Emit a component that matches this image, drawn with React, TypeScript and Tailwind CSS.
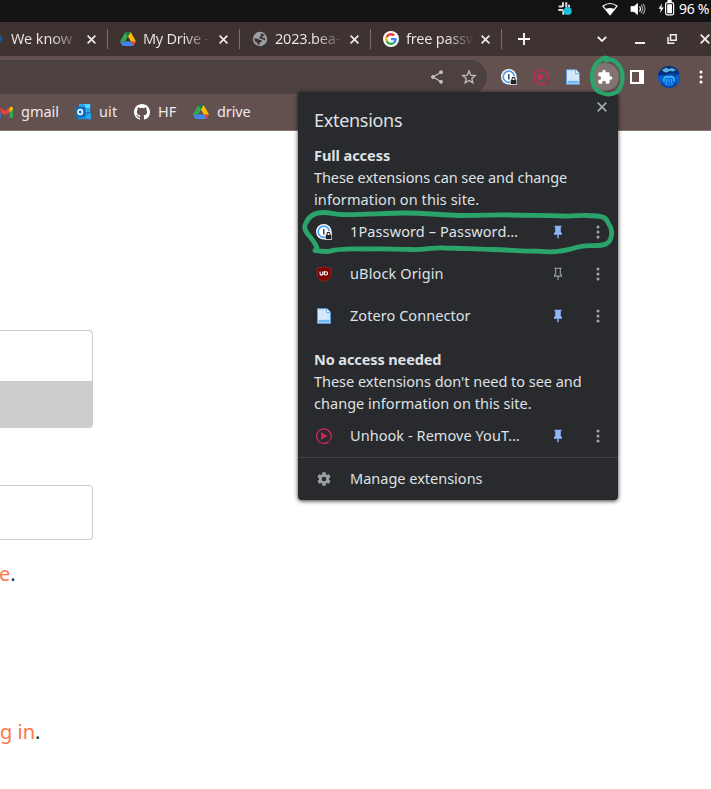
import type { ReactNode } from "react";

function Drive() {
  return (
    <svg viewBox="0 0 87.3 78" className="h-[14px] w-4 shrink-0">
      <path fill="#4285f4" d="m6.6 66.85 3.85 6.65c.8 1.4 1.95 2.5 3.3 3.3L27.5 53H0c0 1.55.4 3.1 1.2 4.5z" />
      <path fill="#34a853" d="M43.65 25 29.9 1.2c-1.35.8-2.5 1.9-3.3 3.3L1.2 48.5A9.06 9.06 0 0 0 0 53h27.5z" />
      <path fill="#ea4335" d="M73.55 76.8c1.35-.8 2.5-1.9 3.3-3.3l1.6-2.75L86.1 57.5c.8-1.4 1.2-2.95 1.2-4.5H59.8l5.85 11.5z" />
      <path fill="#188038" d="M43.65 25 57.4 1.2C56.05.4 54.5 0 52.9 0H34.4c-1.6 0-3.15.45-4.5 1.2z" />
      <path fill="#4285f4" d="M59.8 53H27.5L13.75 76.8c1.35.8 2.9 1.2 4.5 1.2h50.8c1.6 0 3.15-.45 4.5-1.2z" />
      <path fill="#fbbc04" d="m73.4 26.5-12.7-22c-.8-1.4-1.95-2.5-3.3-3.3L43.65 25 59.8 53h27.45c0-1.55-.4-3.1-1.2-4.5z" />
    </svg>
  );
}

function Google() {
  return (
    <svg viewBox="0 0 64 64" className="h-4 w-4 shrink-0">
      <circle cx="32" cy="32" r="32" fill="#fff" />
      <g transform="translate(8 8)">
        <path fill="#EA4335" d="M24 9.5c3.54 0 6.71 1.22 9.21 3.6l6.85-6.85C35.9 2.38 30.47 0 24 0 14.62 0 6.51 5.38 2.56 13.22l7.98 6.19C12.43 13.72 17.74 9.5 24 9.5z" />
        <path fill="#4285F4" d="M46.98 24.55c0-1.57-.15-3.09-.38-4.55H24v9.02h12.94c-.58 2.96-2.26 5.48-4.78 7.18l7.73 6c4.51-4.18 7.09-10.36 7.09-17.65z" />
        <path fill="#FBBC05" d="M10.53 28.59A14.5 14.5 0 0 1 9.77 24c0-1.6.27-3.14.76-4.59l-7.98-6.19A23.9 23.9 0 0 0 0 24c0 3.88.92 7.54 2.56 10.78z" />
        <path fill="#34A853" d="M24 48c6.48 0 11.93-2.13 15.89-5.81l-7.73-6c-2.15 1.45-4.92 2.3-8.16 2.3-6.26 0-11.57-4.22-13.47-9.91l-7.98 6.19C6.51 42.62 14.62 48 24 48z" />
      </g>
    </svg>
  );
}

function Globe() {
  return (
    <svg viewBox="0 0 16 16" className="h-4 w-4 shrink-0">
      <circle cx="8" cy="8" r="7.2" fill="#9aa0a6" />
      <path fill="#3f3332" d="M2.200 7.200 5 7.400l2.400 1.400 2.400.4-.3 1.700-1.800.5-.2 2.500-1.600-.1-.6-2-2.300-1.400zM8.600 2.400l2.200.3 2.100 2-2.200.4-.5 1.400 2.500.6.7 1.500-1.100.8-1.900-1.300-2.200-.4-1-1.500L8.800 5z" />
    </svg>
  );
}

function BlueSite() {
  return (
    <svg viewBox="0 0 16 16" className="h-4 w-4 shrink-0">
      <path fill="#155a9c" d="M8 2.500h3L14.800 8 11 13.500H8z" />
    </svg>
  );
}

function OnePassword() {
  return (
    <svg viewBox="0 0 16 16" className="h-4 w-4 shrink-0">
      <circle cx="7.800" cy="7.800" r="7.800" fill="#fff" />
      <circle cx="7.800" cy="7.800" r="5.600" fill="#fff" stroke="#4a9cf5" strokeWidth="1.700" />
      <rect x="7" y="5" width="1.600" height="5.400" rx=".5" fill="#3b4b66" />
      <path fill="#fff" d="M9 10.400 10 8.200l1.500-1.200h2.400L15.800 9v7H9z" />
      <path d="M11 11V9.900a1.500 1.500 0 0 1 3 0V11" fill="none" stroke="#202124" strokeWidth="1.100" />
      <rect x="9.700" y="10.900" width="5.600" height="4.400" rx=".6" fill="#202124" />
    </svg>
  );
}

function Unhook() {
  return (
    <svg viewBox="0 0 16 16" className="h-4 w-4 shrink-0">
      <path d="M12.600 13.900A7.300 7.300 0 1 1 15.300 8a7.200 7.200 0 0 1-.7 3.200" fill="none" stroke="#d42456" strokeWidth="1.400" />
      <path d="M15 9.500a7.300 7.300 0 0 1-2.600 4.400" fill="none" stroke="#8c2643" strokeWidth="1.200" />
      <path fill="#d42456" d="M5.200 4.300 11.600 8l-6.400 3.700z" />
    </svg>
  );
}

function Zotero() {
  return (
    <svg viewBox="0 0 16 16" className="h-4 w-4 shrink-0">
      <path d="M1.500.7h9.700l3.300 3.500v11.100h-13z" fill="#d5e8fb" stroke="#5c9de0" />
      <path d="M10.700.8v3.800h3.700" fill="#fff" stroke="#5c9de0" strokeWidth=".9" />
      <path d="M3 12.300h10.200v1.500H3z" fill="#7dc3f4" stroke="#479fe5" strokeWidth=".6" />
    </svg>
  );
}

function Shield() {
  return (
    <svg viewBox="0 0 16 16" className="h-4 w-4 shrink-0">
      <path fill="#800000" stroke="#a03030" strokeWidth=".7" d="M8 .5C10.200 1.700 12.300 2.100 14.700 2.100V8.200C14.700 11.600 12.300 13.800 8 15.700C3.700 13.800 1.300 11.600 1.300 8.200V2.100C3.700 2.100 5.800 1.700 8 .5z" />
      <path d="M4.100 5.500v2.300q0 1.300 1.200 1.300 1.500 0 1.500-1.300V5.500M8.300 5v4.200" fill="none" stroke="#fff" strokeWidth="1.100" />
      <circle cx="10" cy="7.400" r="1.600" fill="none" stroke="#fff" strokeWidth="1.100" />
    </svg>
  );
}

function Gmail() {
  return (
    <svg viewBox="0 0 16 16" className="h-4 w-4 shrink-0">
      <path fill="#4285f4" d="M0 4h3.600v10H1.100A1.100 1.100 0 0 1 0 12.900z" />
      <path fill="#34a853" d="M12.400 4H16v8.900a1.100 1.100 0 0 1-1.100 1.100h-2.500z" />
      <path fill="#ea4335" d="M3.600 3.800 8 7.100l4.400-3.300v4.500L8 11.600 3.600 8.300z" />
      <path fill="#fbbc04" d="m12.400 3.800 1-.8C14.500 2.200 16 3 16 4.300v1.300l-3.600 2.700z" />
      <path fill="#c5221f" d="m3.600 3.800-1-.8C1.500 2.200 0 3 0 4.300v1.300l3.600 2.700z" />
    </svg>
  );
}

function Outlook() {
  return (
    <svg viewBox="0 0 16 16" className="h-4 w-4 shrink-0">
      <path fill="#1976c5" d="M4 0h11.200v12H4z" />
      <path fill="#29a8ea" d="M4 0h5.600v4H4z" />
      <path fill="#50d9ff" d="M9.600 0h5.600v4H9.600z" />
      <path fill="#28a8ea" d="M9.600 4h5.600v4H9.600z" />
      <path fill="#1490df" d="M3 8l13 1v6.300H3z" />
      <path fill="#28a8ea" d="m16 9-7 4 6.500 2.600.5-.5z" />
      <rect y="2.800" width="10.500" height="10.500" rx=".8" fill="#0f6cbd" />
      <ellipse cx="5.200" cy="8" rx="2.200" ry="2.500" fill="none" stroke="#fff" strokeWidth="1.500" />
    </svg>
  );
}

function Github() {
  return (
    <svg viewBox="0 0 16 16" className="h-4 w-4 shrink-0" fill="#fff">
      <path d="M8 0C3.58 0 0 3.58 0 8c0 3.54 2.29 6.53 5.47 7.59.4.07.55-.17.55-.38 0-.19-.01-.82-.01-1.49-2.01.37-2.53-.49-2.69-.94-.09-.23-.48-.94-.82-1.13-.28-.15-.68-.52-.01-.53.63-.01 1.08.58 1.23.82.72 1.21 1.87.87 2.33.66.07-.52.28-.87.51-1.07-1.78-.2-3.64-.89-3.64-3.95 0-.87.31-1.59.82-2.15-.08-.2-.36-1.02.08-2.12 0 0 .67-.21 2.2.82a7.42 7.42 0 0 1 4 0c1.53-1.04 2.2-.82 2.2-.82.44 1.1.16 1.92.08 2.12.51.56.82 1.27.82 2.15 0 3.07-1.87 3.75-3.65 3.95.29.25.54.73.54 1.48 0 1.07-.01 1.93-.01 2.2 0 .21.15.46.55.38A8.01 8.01 0 0 0 16 8c0-4.42-3.58-8-8-8z" />
    </svg>
  );
}

function Cross({ className }: { className: string }) {
  return (
    <svg viewBox="0 0 10 10" className={className} fill="none" stroke="currentColor" strokeWidth="1.8">
      <path d="m.7.7 8.600 8.600M9.300.7.7 9.300" />
    </svg>
  );
}

function Dots({ className }: { className: string }) {
  return (
    <svg viewBox="0 0 4 14" className={className} fill="currentColor">
      <circle cx="2" cy="2" r="1.500" />
      <circle cx="2" cy="7" r="1.500" />
      <circle cx="2" cy="12" r="1.500" />
    </svg>
  );
}

function Pin({ filled }: { filled: boolean }) {
  return filled ? (
    <svg viewBox="0 0 8 14" className="h-[14px] w-2" fill="#8ab4f8">
      <path d="M.5.700h7v1.500H6.800v4.600L8 8.300v1.400H0V8.300l1.200-1.500V2.200H.5zM3.300 9.700h1.400v3.600H3.300z" />
    </svg>
  ) : (
    <svg viewBox="0 0 8 14" className="h-[14px] w-2" fill="none" stroke="#9aa0a6" strokeWidth="1.100">
      <path d="M.3 1.300h7.400M1.700 1.300v5.500L.5 8.300v.8h7v-.8L6.300 6.800V1.300M4 9v4.300" />
    </svg>
  );
}

function Tab({ icon, title, className }: { icon: ReactNode; title: string; className: string }) {
  return (
    <div className={`flex h-full shrink-0 items-center pl-3 ${className}`}>
      {icon}
      <span className="ml-[7px] w-[68px] overflow-hidden bg-linear-to-r from-[#eeeaea] from-60% to-transparent to-100% bg-clip-text whitespace-nowrap text-transparent">
        {title}
      </span>
      <Cross className="mr-[11px] ml-auto h-[9px] w-[9px] shrink-0 text-[#f0eded]" />
      <span className="h-5 w-px bg-[#796f6e]" />
    </div>
  );
}

function Bookmark({ icon, label, className }: { icon: ReactNode; label: string; className: string }) {
  return (
    <div className={`flex shrink-0 items-center gap-2 ${className}`}>
      {icon}
      <span className="whitespace-nowrap">{label}</span>
    </div>
  );
}

function Tool({ children }: { children: ReactNode }) {
  return <div className="flex h-8 w-8 shrink-0 items-center justify-center">{children}</div>;
}

function Row({ icon, name, pinned, tracking }: { icon: ReactNode; name: string; pinned: boolean; tracking: string }) {
  return (
    <div className="flex h-[42px] items-center pl-[18px]">
      {icon}
      <span className={`ml-[18px] w-[188px] pb-[2px] whitespace-nowrap ${tracking}`}>{name}</span>
      <span className="flex w-10 justify-center pl-px">
        <Pin filled={pinned} />
      </span>
      <span className="flex w-[41px] justify-center pl-px text-[#a2a5a9]">
        <Dots className="h-[14px] w-1" />
      </span>
    </div>
  );
}

function Panel() {
  return (
    <section className="absolute top-[92px] left-[298px] h-[408px] w-80 rounded-[4px] bg-[#292a2d] text-[14.500px] leading-[22px] text-[#dfe1e5] shadow-[0_1px_4px_rgba(0,0,0,0.8)]">
      <header className="flex h-[52px] justify-between pr-[11px] pl-4">
        <h1 className="mt-[17px] text-[18px] tracking-[-0.3px]">Extensions</h1>
        <Cross className="mt-[10px] h-[10px] w-[10px] text-[#a2a5a9]" />
      </header>
      <div className="px-4 pb-px whitespace-nowrap">
        <h2 className="font-bold tracking-[-0.05px]">Full access</h2>
        <p className="tracking-[-0.08px]">These extensions can see and change</p>
        <p className="tracking-[0.1px]">information on this site.</p>
      </div>
      <Row icon={<OnePassword />} name="1Password – Password…" pinned tracking="tracking-[0.11px]" />
      <Row icon={<Shield />} name="uBlock Origin" pinned={false} tracking="tracking-[0.12px]" />
      <Row icon={<Zotero />} name="Zotero Connector" pinned tracking="tracking-[0.06px]" />
      <div className="px-4 pt-[11px] pb-px whitespace-nowrap">
        <h2 className="font-bold tracking-[-0.1px]">No access needed</h2>
        <p className="tracking-[-0.03px]">These extensions don't need to see and</p>
        <p className="tracking-[0.03px]">change information on this site.</p>
      </div>
      <Row icon={<Unhook />} name="Unhook - Remove YouT…" pinned tracking="tracking-[0.06px]" />
      <footer className="flex h-[43px] items-center gap-[18px] border-t border-[#414347] pl-[18px]">
        <svg viewBox="0 0 24 24" className="h-4 w-4" fill="#9aa0a6">
          <path d="M19.430 12.980c.04-.32.07-.64.07-.980s-.03-.660-.07-.980l2.110-1.650c.19-.15.24-.42.12-.64l-2-3.460c-.12-.22-.39-.3-.61-.22l-2.490 1c-.52-.4-1.080-.73-1.690-.98l-.38-2.650A.488.488 0 0 0 14 2h-4c-.25 0-.46.18-.49.42l-.38 2.650c-.61.25-1.170.59-1.690.98l-2.490-1c-.23-.09-.49 0-.61.22l-2 3.460c-.13.22-.07.49.12.64l2.110 1.650c-.04.32-.07.65-.07.98s.03.66.07.98l-2.110 1.650c-.19.15-.24.42-.12.64l2 3.460c.12.22.39.3.61.22l2.490-1c.52.4 1.080.73 1.690.98l.38 2.650c.03.24.24.42.49.42h4c.25 0 .46-.18.49-.42l.38-2.650c.61-.25 1.170-.59 1.690-.98l2.490 1c.23.09.49 0 .61-.22l2-3.460c.12-.22.07-.49-.12-.64zM12 15.500a3.500 3.500 0 1 1 0-7 3.500 3.500 0 0 1 0 7z" />
        </svg>
        <span className="pb-[2px]">Manage extensions</span>
      </footer>
    </section>
  );
}

function StatusBar() {
  return (
    <div className="flex h-[22px] items-center bg-[#131313] pb-[5px] text-white">
      <div className="ml-[557px] flex shrink-0 items-center">
        <svg viewBox="0 0 16 16" className="h-4 w-4" fill="none" stroke="#ddd" strokeWidth="2" strokeLinecap="round">
          <path d="M6 2v3M2.500 5.500H5M9.300 2v3.500M12 4.500v1M2 9h3.500M6.300 10.500v2.500" />
          <circle cx="10.700" cy="10" r="4" fill="#19c1df" stroke="none" />
        </svg>
        <svg viewBox="0 0 16 14" className="ml-[29px] h-[14px] w-4">
          <path d="M1 4q7-5 14 0L8 12.800z" fill="none" stroke="#fff" strokeWidth="1.200" />
          <path d="M3.600 7Q8 5 12.400 7L8 12.800z" fill="#fff" />
        </svg>
        <svg viewBox="0 0 16 14" className="ml-3 h-[14px] w-4" fill="none" stroke="#fff" strokeWidth="1.200">
          <path d="M1 4.500h3L7.500 1.500v11L4 9.500H1z" fill="#fff" strokeWidth=".8" />
          <path d="M9.500 4.500q2 2.500 0 5" />
          <path d="M11 3q3.500 4 0 8M13 1.800q4 5.200 0 10.400" stroke="#999" />
        </svg>
        <svg viewBox="0 0 17 16" className="mb-[2px] ml-[12px] h-4 w-[17px]">
          <path fill="#fff" d="M4 3.500.5 8.800h2.300L2 13l3.700-5.500H3.400z" />
          <rect x="7.600" y="2.600" width="8" height="12.200" rx="1.500" fill="none" stroke="#fff" strokeWidth="1.200" />
          <path fill="#fff" d="M9.500 0h4.200v2H9.500zM9.200 4.200H14v9H9.200z" />
        </svg>
        <span className="ml-[4px] text-[14px] tracking-[-0.3px] whitespace-nowrap">96 %</span>
      </div>
    </div>
  );
}

function TabStrip() {
  return (
    <div className="flex h-[34px] items-center bg-[#3f3332] text-[14.500px] text-[#eeeaea]">
      <Tab icon={<BlueSite />} title="We know" className="-ml-6 w-[132px] tracking-[-0.1px]" />
      <Tab icon={<Drive />} title="My Drive -" className="w-[132px] tracking-[-0.3px]" />
      <Tab icon={<Globe />} title="2023.bea-" className="w-[131px] tracking-[-0.2px]" />
      <Tab icon={<Google />} title="free passw" className="w-[131px] tracking-[-0.2px]" />
      <svg viewBox="0 0 12 12" className="ml-4 h-3 w-3 shrink-0" stroke="#fff" strokeWidth="1.800">
        <path d="M6 0v12M0 6h12" />
      </svg>
      <svg viewBox="0 0 10 6" className="ml-[67px] h-[6px] w-[10px] shrink-0" fill="none" stroke="#fff" strokeWidth="1.700">
        <path d="m.8.8 4.200 4.200L9.200.8" />
      </svg>
      <span className="mt-2 ml-[28px] h-[2px] w-[10px] shrink-0 bg-[#eee]" />
      <svg viewBox="0 0 10 10" className="ml-[22px] h-[10px] w-[10px] shrink-0" fill="none" stroke="#eee" strokeWidth="1.500">
        <path d="M3.500.8h5.700v5.500H3.500zM1 3v6.200h6.500" />
      </svg>
      <Cross className="ml-[23px] h-[10px] w-[10px] shrink-0 text-[#eee]" />
    </div>
  );
}

function Toolbar() {
  return (
    <div className="flex h-[38px] items-center bg-[#635150] pt-1">
      <div className="flex h-[34px] w-[487px] shrink-0 items-center justify-end rounded-r-full bg-[#4c4140] pr-[2px]">
        <Tool>
          <svg viewBox="0 0 12 14" className="h-[14px] w-3" fill="#c3bebe" stroke="#c3bebe">
            <path d="M10 2.200 2 7l8 4.800" fill="none" strokeWidth="1.200" />
            <circle cx="10" cy="2.200" r="1.500" />
            <circle cx="2" cy="7" r="1.500" />
            <circle cx="10" cy="11.800" r="1.500" />
          </svg>
        </Tool>
        <Tool>
          <svg viewBox="0 0 16 16" className="h-4 w-4" fill="none" stroke="#c3bebe" strokeWidth="1.300">
            <path d="m8 2 1.700 4.100 4.500.4-3.400 2.900 1 4.400L8 11.500l-3.800 2.300 1-4.400-3.400-2.900 4.500-.4z" />
          </svg>
        </Tool>
      </div>
      <div className="ml-[6px] flex">
        <Tool><OnePassword /></Tool>
        <Tool><Unhook /></Tool>
        <Tool><Zotero /></Tool>
        <Tool>
          <span className="flex h-7 w-7 items-center justify-center rounded-full bg-[#827473]">
            <svg viewBox="0 0 24 24" className="mr-px mb-px h-4 w-4" fill="#fff">
              <path d="M20.500 11H19V7c0-1.100-.9-2-2-2h-4V3.500a2.500 2.500 0 0 0-5 0V5H4c-1.100 0-1.990.9-1.990 2v3.800H3.500c1.490 0 2.700 1.210 2.700 2.700s-1.210 2.700-2.700 2.700H2V20c0 1.100.9 2 2 2h3.800v-1.500c0-1.490 1.210-2.700 2.700-2.700s2.700 1.210 2.700 2.700V22H17c1.100 0 2-.9 2-2v-4h1.500a2.500 2.500 0 0 0 0-5z" />
            </svg>
          </span>
        </Tool>
        <Tool>
          <svg viewBox="0 0 14 14" className="h-[14px] w-[14px]">
            <path d="M1 1h12v12H1z" fill="none" stroke="#fff" strokeWidth="2" />
            <path d="M9 1H14v12H9z" fill="#fff" />
          </svg>
        </Tool>
        <Tool>
          <svg viewBox="0 0 22 22" className="h-[22px] w-[22px]">
            <defs>
              <clipPath id="avatar"><circle cx="11" cy="11" r="11" /></clipPath>
            </defs>
            <g clipPath="url(#avatar)">
              <path fill="#0743a4" d="M0 0h22v22H0z" />
              <path fill="#0a5cc8" d="M0 9q3-1 5 1t0 6l-3 3-3-3zM22 8q-3 0-5 3l1 6 4 1z" />
              <path fill="#06307a" d="M0 6Q4 0 11 0q8 0 11 7l-4 1-4-1-5 1-5 1-4 1z" />
              <path fill="#5fb0d8" d="m4 4 4-2.200 3 1.200 3-1 4 2-3 1.400-3-.6-3 1.600-3-.4z" />
              <path fill="#0d6fe0" d="M5 11q6-4 12 0l0 5-3 4H8l-3-4z" />
              <path d="M6 15.500Q5 11 9 10.500l2 .8 2-.8q4 .5 3 5" fill="none" stroke="#46c1f5" strokeWidth="1.400" />
              <path d="M8.500 13v3.500l-1 2M13.500 13v3.500l1 2M11 12.500v4" fill="none" stroke="#2fa6f0" strokeWidth="1" />
            </g>
          </svg>
        </Tool>
        <Tool><Dots className="h-[14px] w-1 text-white" /></Tool>
      </div>
    </div>
  );
}

function Annotations() {
  return (
    <svg viewBox="0 0 711 789" className="pointer-events-none absolute inset-0 h-full w-full" fill="none" stroke="#2aa46b" strokeLinecap="round" strokeLinejoin="round">
      <path strokeWidth="4.300" d="M609 59.500C607 57 603 57 601 60C595 63 592 70 592 76.500C592 84 595 91 601 92.500C606 95.500 613 94.500 617 92C621 88 623 82 622.500 75.500C622 68 618 63 613 60C611 59 609 59.500 606 60.500" />
      <path strokeWidth="4.800" d="M328 251.500C324 251.500 319 251 315 250.500L317 248C315 242 310 237 307 233C304 229 304 226 306 223C309 216 315 212.500 323 212.500C331 212.500 336 214.500 342 214.500C360 215 385 213 405 213C425 213 440 215 460 215.500C480 215.500 497 214.500 510 215C530 215.500 548 215 564 216C575 216.500 580 215 588 215.500C596 215.500 601 216.500 604 217.500C607 219 608 223 610 226C612 229 612 231 611.500 235C611 239 610 242 606 244C600 247 588 244.500 581 246.500C573 248 567 250.500 560 251C550 253 541 251 533 251C520 252 510 249.500 493 249.500C475 249.500 460 248 445 248C432 247 426 250 412 249.500C395 249 382 248.500 367 249C350 249 340 248 328 251.500z" />
    </svg>
  );
}

export default function App() {
  return (
    <div className="relative h-[789px] w-[711px] overflow-hidden bg-white font-['Noto_Sans','Open_Sans',sans-serif]">
      <StatusBar />
      <TabStrip />
      <Toolbar />
      <nav className="flex h-[37px] items-center border-b border-[#887979] bg-[#635150] text-[14.500px] text-[#eeeaea]">
        <Bookmark icon={<Gmail />} label="gmail" className="-ml-[3px] w-[78px]" />
        <Bookmark icon={<Outlook />} label="uit" className="w-[59px] tracking-[0.1px]" />
        <Bookmark icon={<Github />} label="HF" className="w-[59px]" />
        <Bookmark icon={<Drive />} label="drive" className="tracking-[-0.1px]" />
      </nav>
      <main className="pt-[199px] text-[20px] leading-[28px] text-[#222c44]">
        <div className="h-[98px] w-[93px] overflow-hidden rounded-r-[4px] border border-l-0 border-[#ccc]">
          <div className="mt-[50px] h-[48px] bg-[#ccc]" />
        </div>
        <div className="mt-[57px] h-[55px] w-[93px] rounded-r-[4px] border border-l-0 border-[#ccc]" />
        <p className="mt-5 -ml-px"><span className="text-[#ff7648]">e</span>.</p>
        <p className="mt-[130px]"><span className="text-[#ff7648]">g in</span>.</p>
      </main>
      <Panel />
      <Annotations />
    </div>
  );
}
